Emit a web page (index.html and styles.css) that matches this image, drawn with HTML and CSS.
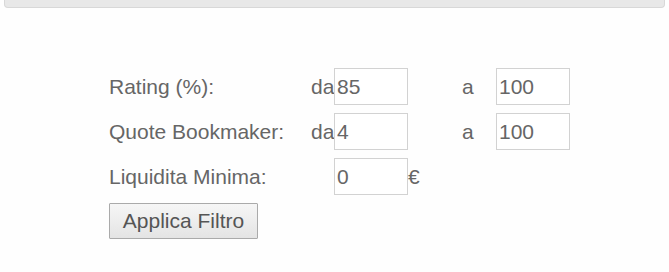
FILE: index.html
```html
<!DOCTYPE html>
<html lang="it">
<head>
    <meta charset="UTF-8">
    <meta name="viewport" content="width=device-width, initial-scale=1.0">
    <title>Filtro</title>
    <link rel="stylesheet" href="styles.css">
</head>
<body>
    <div class="top-bar"></div>
    <form class="filter" onsubmit="return false;">
        <div class="label">Rating (%):</div>
        <div class="from">da</div>
        <input class="field" type="text" value="85">
        <div class="unit"></div>
        <div class="to">a</div>
        <input class="field" type="text" value="100">

        <div class="label">Quote Bookmaker:</div>
        <div class="from">da</div>
        <input class="field" type="text" value="4">
        <div class="unit"></div>
        <div class="to">a</div>
        <input class="field" type="text" value="100">

        <div class="label">Liquidita Minima:</div>
        <div class="from"></div>
        <input class="field" type="text" value="0">
        <div class="unit">&euro;</div>
        <div class="to"></div>
        <div></div>

        <div class="actions">
            <button class="button" type="submit">Applica Filtro</button>
        </div>
    </form>
</body>
</html>
```

FILE: styles.css
```css
body {
    font-family: "Liberation Sans", Arial, Helvetica, sans-serif;
    background-color: #fefefe;
    color: #666;
    margin: 0;
    padding: 0;
}
.top-bar {
    height: 8px;
    margin: 0 4px;
    background-color: #e8e8e8;
    border: 1px solid #d8d8d8;
    border-top: none;
    border-radius: 0 0 4px 4px;
    box-sizing: border-box;
}
.filter {
    display: grid;
    grid-template-columns: 202px 23px 74px 54px 34px 74px;
    grid-auto-rows: 37px;
    row-gap: 8px;
    align-items: center;
    margin: 60px 0 0 109px;
    font-size: 21px;
}
.from {
    text-align: right;
}
.unit {
    padding-left: 0;
}
.field {
    box-sizing: border-box;
    width: 74px;
    height: 37px;
    margin: 0;
    padding: 0 2px;
    border: 1px solid #d2d2d2;
    background-color: #fff;
    color: #666;
    font-family: inherit;
    font-size: 21px;
    outline: none;
}
.actions {
    grid-column: 1 / -1;
    height: 37px;
}
.button {
    box-sizing: border-box;
    width: 149px;
    height: 36px;
    padding: 0;
    border: 1px solid #aaa;
    border-radius: 1px;
    background: linear-gradient(#f6f6f6, #e4e4e4);
    color: #555;
    font-family: inherit;
    font-size: 21px;
    cursor: pointer;
}
```
